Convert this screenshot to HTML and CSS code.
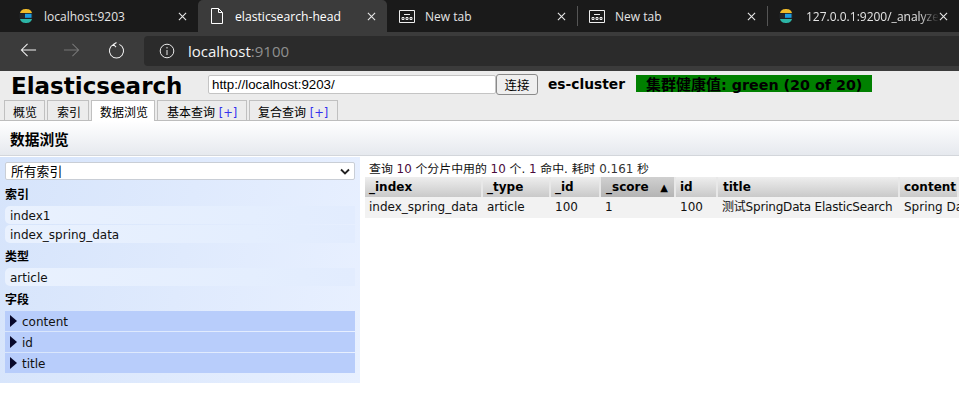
FILE: index.html
```html
<!DOCTYPE html>
<html lang="zh">
<head>
<meta charset="utf-8">
<title>elasticsearch-head</title>
<link rel="stylesheet" href="styles.css">
</head>
<body>
<div class="tabstrip">
  <div class="tab tab-first">
    <svg class="favicon" viewBox="0 0 16 16"><path d="M2 5C3 1.500 5.500 1 8 1s5 .5 6 4z" fill="#f0bb2a"/><rect x="1.500" y="5.500" width="13" height="5" fill="#23262b"/><rect x="7" y="5.800" width="6.500" height="4" fill="#1c9ce0"/><path d="M2 11h12c-1 3.500-3.500 4-6 4s-5-.5-6-4z" fill="#2cb5a6"/></svg>
    <span class="tab-title">localhost:9203</span>
    <svg class="close" viewBox="0 0 10 10"><path d="M1 1l8 8M9 1L1 9"/></svg>
  </div>
  <div class="tab tab-active">
    <svg class="page-icon" viewBox="0 0 14 16"><path d="M1.500 .5h7l4 4v11h-11zM8.500 .5v4h4"/></svg>
    <span class="tab-title">elasticsearch-head</span>
    <svg class="close" viewBox="0 0 10 10"><path d="M1 1l8 8M9 1L1 9"/></svg>
  </div>
  <div class="tab tab-plain">
    <svg class="newtab-icon" viewBox="0 0 16 13"><path d="M.5 .5h15v12H.5zM5 4.500h6"/><path d="M3 7.500h2v2H3zM7 7.500h2v2H7zM11 7.500h2v2h-2z"/></svg>
    <span class="tab-title">New tab</span>
    <svg class="close" viewBox="0 0 10 10"><path d="M1 1l8 8M9 1L1 9"/></svg>
  </div>
  <div class="tab tab-sep">
    <svg class="newtab-icon" viewBox="0 0 16 13"><path d="M.5 .5h15v12H.5zM5 4.500h6"/><path d="M3 7.500h2v2H3zM7 7.500h2v2H7zM11 7.500h2v2h-2z"/></svg>
    <span class="tab-title">New tab</span>
    <svg class="close" viewBox="0 0 10 10"><path d="M1 1l8 8M9 1L1 9"/></svg>
  </div>
  <div class="tab tab-sep tab-last">
    <svg class="favicon" viewBox="0 0 16 16"><path d="M2 5C3 1.500 5.500 1 8 1s5 .5 6 4z" fill="#f0bb2a"/><rect x="1.500" y="5.500" width="13" height="5" fill="#23262b"/><rect x="7" y="5.800" width="6.500" height="4" fill="#1c9ce0"/><path d="M2 11h12c-1 3.500-3.500 4-6 4s-5-.5-6-4z" fill="#2cb5a6"/></svg>
    <span class="tab-title tab-fade">127.0.0.1:9200/_analyze</span>
    <svg class="close" viewBox="0 0 10 10"><path d="M1 1l8 8M9 1L1 9"/></svg>
  </div>
</div>
<div class="toolbar">
  <svg class="nav-icon" viewBox="0 0 18 16"><path d="M17 8H1.500M8 1.500L1.500 8 8 14.500"/></svg>
  <svg class="nav-icon nav-off" viewBox="0 0 18 16"><path d="M1 8h15.500M10 1.500L16.500 8 10 14.500"/></svg>
  <svg class="nav-icon nav-reload" viewBox="0 0 18 18"><path d="M6 2.500a7.500 7.500 0 1 0 6 0M9 .5L5.800 2.600 8.500 5.500"/></svg>
  <div class="address">
    <svg class="info-icon" viewBox="0 0 16 16"><circle cx="8" cy="8" r="6.800"/><path d="M8 7v5M8 4v1.500"/></svg>
    <span class="host">localhost</span><span class="port">:9100</span>
  </div>
</div>
<div class="page">
  <div class="header">
    <h1 class="brand">Elasticsearch</h1>
    <input class="url" type="text" value="http://localhost:9203/">
    <button class="connect" type="button">连接</button>
    <span class="cluster">es-cluster</span>
    <span class="health"><span class="health-cjk">集群健康值</span>: green (20 of 20)</span>
  </div>
  <div class="nav">
    <div class="nav-tab">概览</div>
    <div class="nav-tab">索引</div>
    <div class="nav-tab nav-active">数据浏览</div>
    <div class="nav-tab">基本查询 <span class="plus">[+]</span></div>
    <div class="nav-tab">复合查询 <span class="plus">[+]</span></div>
  </div>
  <div class="section-head">数据浏览</div>
  <div class="browser">
    <aside class="side">
      <div class="select"><span>所有索引</span><svg viewBox="0 0 10 7"><path d="M1 1.500l4 4 4-4"/></svg></div>
      <h3 class="side-title side-title-first">索引</h3>
      <div class="item">index1</div>
      <div class="item">index_spring_data</div>
      <h3 class="side-title">类型</h3>
      <div class="item">article</div>
      <h3 class="side-title">字段</h3>
      <div class="field"><i class="arrow"></i><span class="field-name">content</span></div>
      <div class="field"><i class="arrow"></i><span class="field-name">id</span></div>
      <div class="field"><i class="arrow"></i><span class="field-name">title</span></div>
    </aside>
    <main class="results">
      <div class="summary">查询 <b>10</b> 个分片中用的 <b>10</b> 个. <b>1</b> 命中. 耗时 <em>0.161</em> 秒</div>
      <div class="grid">
        <div class="th">_index</div>
        <div class="th">_type</div>
        <div class="th">_id</div>
        <div class="th th-sorted col-inset">_score<span class="sort">▲</span></div>
        <div class="th">id</div>
        <div class="th col-inset">title</div>
        <div class="th">content</div>
        <div class="td">index_spring_data</div>
        <div class="td">article</div>
        <div class="td">100</div>
        <div class="td col-inset">1</div>
        <div class="td">100</div>
        <div class="td col-inset td-title">测试SpringData ElasticSearch</div>
        <div class="td">Spring Da</div>
      </div>
    </main>
  </div>
</div>
</body>
</html>
```
FILE: styles.css
```css
* { box-sizing: border-box; }
html, body { margin: 0; height: 100%; overflow: hidden; background: #fff; }
body { font-family: "DejaVu Sans", Verdana, "Noto Sans CJK SC", sans-serif; font-size: 12px; color: #000; }

.tabstrip { display: flex; height: 32px; background: #1a1a1a; color: #e4e4e4; font-family: "Open Sans", "Noto Sans", sans-serif; font-size: 12px; }
.tab { display: flex; align-items: center; flex: none; width: 190px; height: 32px; padding: 0 11px 0 18px; position: relative; }
.tab-first { width: 198px; }
.tab-active { width: 189px; padding-left: 12px; background: #3b3b3b; color: #fff; border-radius: 5px 5px 0 0; }
.tab-plain { padding-left: 12px; }
.tab-sep { padding-left: 12px; }
.tab-sep::before { content: ""; position: absolute; left: 0; top: 6px; height: 20px; width: 1px; background: #555; }
.tab-last { padding-left: 11px; width: 192px; }
.tab-title { flex: 1; margin-left: 10px; white-space: nowrap; overflow: hidden; }
.tab-active .tab-title { margin-left: 11px; font-size: 12.200px; }
.tab-plain .tab-title, .tab-sep .tab-title { margin-left: 10px; }
.tab-last .tab-title { margin-left: 12px; }
.tab-fade { -webkit-mask-image: linear-gradient(to right, #000 85%, transparent); mask-image: linear-gradient(to right, #000 85%, transparent); }
.favicon { width: 16px; height: 16px; flex: none; }
.page-icon { width: 14px; height: 16px; flex: none; fill: none; stroke: #fff; stroke-width: 1; }
.newtab-icon { width: 16px; height: 13px; flex: none; fill: none; stroke: #eee; stroke-width: 1; }
.close { width: 9px; height: 9px; flex: none; fill: none; stroke: #e8e8e8; stroke-width: 1.200; }

.toolbar { display: flex; align-items: center; height: 36px; background: #3b3b3b; padding-left: 20px; }
.nav-icon { width: 17px; height: 16px; flex: none; fill: none; stroke: #f2f2f2; stroke-width: 1.100; margin-right: 26px; }
.nav-off { stroke: #777; margin-right: 28px; }
.nav-reload { width: 17px; height: 17px; margin-right: 19px; }
.address { flex: 1; display: flex; align-items: center; height: 30px; margin-top: 1px; background: #2b2b2b; border-radius: 4px 0 0 4px; padding-left: 15px; font-family: "Open Sans", "Noto Sans", sans-serif; font-size: 15px; color: #f4f4f4; }
.info-icon { width: 16px; height: 16px; flex: none; fill: none; stroke: #e8e8e8; stroke-width: 1; margin-right: 13px; }
.port { color: #8f8f8f; }

.page { height: 344px; border-top: 3px solid #3b3b3b; }
.header { display: flex; align-items: flex-start; height: 29px; background: #ececec; padding-left: 11px; }
.brand { margin: 1px 0 0; width: 197px; font-size: 23px; line-height: 29px; font-weight: 700; font-family: "DejaVu Sans", sans-serif; }
.url { width: 288px; height: 19px; margin-top: 4px; padding: 0 3px; border: 1px solid #c4c4c4; border-radius: 2px; background: #fff; font-family: "Liberation Sans", Arial, sans-serif; font-size: 13.300px; color: #000; }
.connect { width: 42px; height: 21px; margin-top: 3px; padding: 0; border: 1px solid #8a8a8a; border-radius: 3px; background: #efefef; font-family: "Noto Sans CJK SC", sans-serif; font-size: 12.500px; line-height: 18px; color: #000; }
.cluster { margin: 4px 0 0 10px; width: 88px; font-size: 13.800px; font-weight: 700; line-height: 18px; }
.health { width: 236px; height: 17px; margin-top: 4px; padding-left: 10px; background: #008000; font-size: 14.300px; font-weight: 700; line-height: 17px; white-space: nowrap; }
.health-cjk { font-family: "Noto Sans CJK SC", sans-serif; font-size: 15px; }

.nav { display: flex; gap: 2px; height: 21px; padding-left: 4px; background: #ececec; border-bottom: 1px solid #bdbdbd; }
.nav-tab { height: 20px; padding: 2px 8px 0; border: 1px solid #c0c0c0; border-bottom: 0; background: #ececec; font-family: "Noto Sans CJK SC", sans-serif; font-size: 12px; line-height: 17px; white-space: nowrap; }
.nav-tab:nth-child(1) { width: 41px; padding-left: 8px; }
.nav-tab:nth-child(2) { width: 42px; padding-left: 9px; }
.nav-tab:nth-child(3) { width: 64px; padding-left: 8px; }
.nav-tab:nth-child(4) { width: 90px; padding-left: 9px; }
.nav-tab:nth-child(5) { width: 89px; padding-left: 8px; }
.nav-active { height: 21px; background: #fff; }
.plus { color: #3333ee; font-family: "DejaVu Sans", sans-serif; font-size: 11.500px; margin-left: 1px; }

.section-head { display: flex; align-items: center; height: 35px; padding: 0 0 0 10px; background: linear-gradient(#fff, #e6e9ee); border-bottom: 1px solid #d3d6db; font-family: "Noto Sans CJK SC", sans-serif; font-size: 14.700px; font-weight: 700; }

.browser { display: flex; align-items: flex-start; padding-top: 1px; }
.side { flex: none; width: 360px; height: 226px; padding: 5px 5px 0; background: linear-gradient(100deg, #d6e4fb, #e8f0ff); }
.select { display: flex; align-items: center; justify-content: space-between; height: 18px; padding: 0 4px 0 5px; background: #fff; border: 1px solid #c9ced6; border-radius: 2px; font-family: "Noto Sans CJK SC", sans-serif; font-size: 12.800px; line-height: 16px; }
.select svg { width: 10px; height: 7px; fill: none; stroke: #222; stroke-width: 1.800; }
.side-title { margin: 5px 0; height: 15px; font-family: "Noto Sans CJK SC", sans-serif; font-size: 12px; line-height: 15px; font-weight: 700; }
.side-title-first { margin-top: 6px; }
.item { height: 18px; margin-bottom: 1px; padding-left: 5px; border-radius: 5px 0 0 5px; background: linear-gradient(to right, #e9f1fe, #e4eefe 70%, #e2ecfe); font-size: 12px; line-height: 20px; color: #111; }
.field { display: flex; align-items: center; height: 20px; margin-bottom: 1px; padding-left: 5px; background: #b8cdfb; font-size: 12px; color: #111; }
.field-name { padding-top: 1px; }
.arrow { width: 0; height: 0; margin-right: 5px; border-left: 7px solid #08082a; border-top: 6px solid transparent; border-bottom: 6px solid transparent; }

.results { flex: 1; min-width: 0; padding: 2px 0 0 5px; overflow: hidden; }
.summary { height: 18px; padding-left: 4px; font-family: "DejaVu Sans", "Noto Sans CJK SC", sans-serif; font-size: 11.900px; line-height: 20px; white-space: nowrap; color: #111; }
.summary b { font-weight: 400; color: #4a0a3c; }
.summary em { font-style: normal; color: #333; }
.grid { display: grid; grid-template-columns: 118px 68px 50px 75px 42px 182px 59px; width: 594px; }
.th { height: 20px; padding-left: 4px; border-right: 2px solid #e8e8e8; background: linear-gradient(#eee, #c9c9c9); font-size: 12px; font-weight: 700; line-height: 21px; white-space: nowrap; overflow: hidden; }
.th-sorted { display: flex; justify-content: space-between; padding-right: 6px; background: linear-gradient(#d0d0d0, #b4b4b4); }
.col-inset { padding-left: 5px; }
.sort { font-size: 10px; }
.td { height: 21px; padding-left: 4px; background: #f2f2f2; font-size: 12px; line-height: 21px; white-space: nowrap; overflow: hidden; color: #111; }
.td-title { letter-spacing: -.2px; }
```
